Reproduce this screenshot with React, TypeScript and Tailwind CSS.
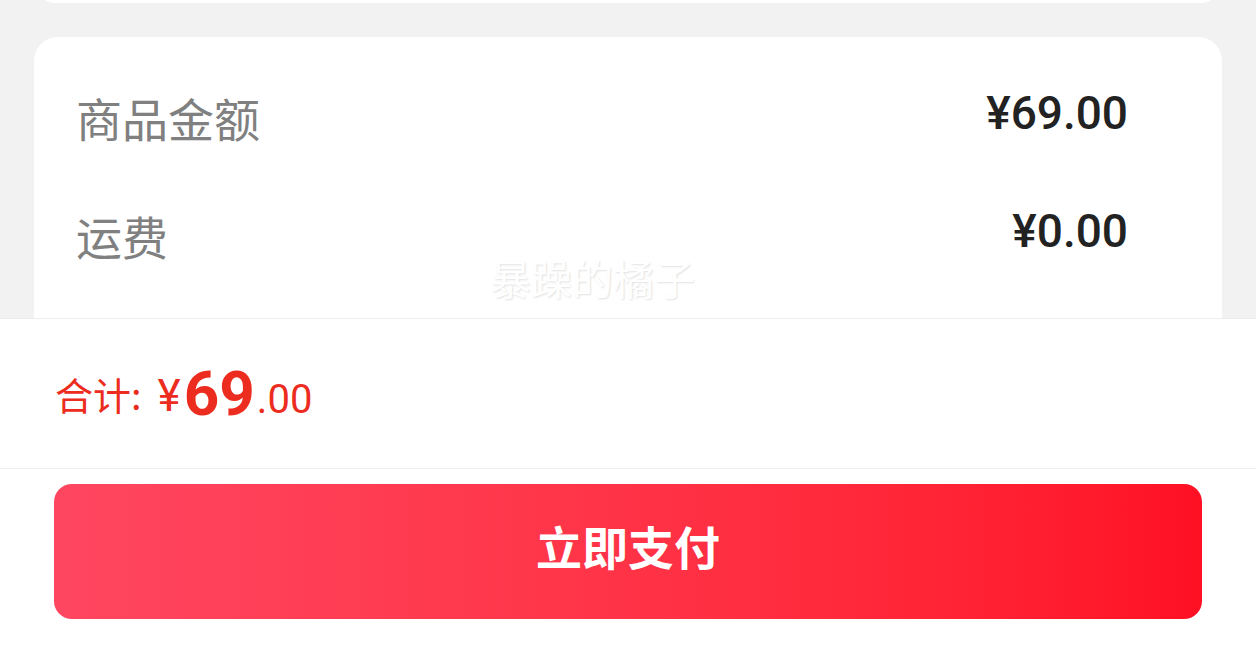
import React from 'react';

const cjk = '"Noto Sans CJK SC", "Noto Sans", sans-serif';
const num = 'Roboto, "Noto Sans CJK SC", sans-serif';

const rows = [
  { label: '商品金额', value: '¥69.00' },
  { label: '运费', value: '¥0.00' },
];

function App() {
  return (
    <div className="relative h-[660px] w-[1256px] overflow-hidden bg-[#f2f2f2]" style={{ fontFamily: cjk }}>
      {/* previous card, mostly scrolled out */}
      <div className="mx-[34px] -mt-[40px] h-[43px] rounded-[24px] bg-white" />

      <div className="mx-[34px] mt-[34px] h-[320px] rounded-[24px] bg-white pl-[42px] pr-[94px] pt-[40px]">
        {rows.map((row) => (
          <div key={row.label} className="flex h-[118px] items-start justify-between">
            <span className="mt-[8px] text-[46px] leading-[64px] text-[#808080]">{row.label}</span>
            <span className="mt-[4px] text-[46px] font-medium leading-[64px] text-[#222]" style={{ fontFamily: num }}>
              {row.value}
            </span>
          </div>
        ))}
      </div>

      <div className="absolute left-[490px] top-[251px] text-[41px] leading-[52px] text-white [text-shadow:1px_1px_2px_rgba(0,0,0,0.12)]">
        暴躁的橘子
      </div>

      <div className="absolute inset-x-0 bottom-0 top-[318px] border-t border-[#ededed] bg-white">
        <div className="flex h-[150px] items-center border-b border-[#eeeeee] pl-[55px] text-[#ec2c1e]">
          <span className="text-[38px] leading-none">合计:</span>
          <span className="ml-[16px] mt-[4px] text-[44px] leading-none" style={{ fontFamily: num }}>¥</span>
          <span className="ml-[3px] text-[62px] font-bold leading-none" style={{ fontFamily: num }}>69</span>
          <span className="ml-[2px] mt-[12px] text-[40px] leading-none" style={{ fontFamily: num }}>.00</span>
        </div>
        <div className="px-[54px] pt-[15px]">
          <button className="flex h-[135px] w-full items-center justify-center rounded-[18px] bg-gradient-to-r from-[#ff4660] to-[#ff1024] pb-[12px] text-[46px] font-bold text-white">
            立即支付
          </button>
        </div>
      </div>
    </div>
  );
}

export default App;
